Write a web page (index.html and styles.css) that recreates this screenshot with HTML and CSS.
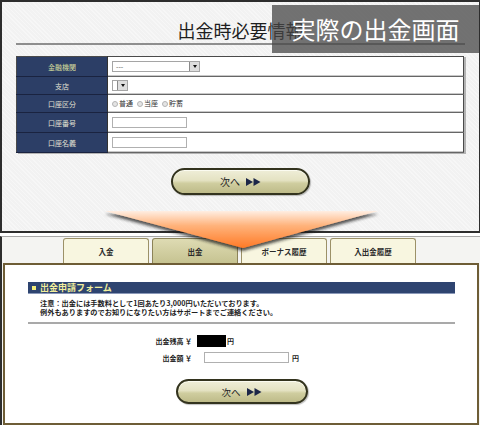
FILE: index.html
```html
<!DOCTYPE html>
<html lang="ja">
<head>
<meta charset="utf-8">
<title>出金時必要情報</title>
<link rel="stylesheet" href="styles.css">
</head>
<body>
<div class="page">
  <section class="top">
    <h1 class="title">出金時必要情報</h1>
    <table class="info">
      <tr class="row-a">
        <th class="lbl-hl">金融機関</th>
        <td><span class="sel sel-wide"><span class="sel-text">---</span><span class="sel-btn"><i></i></span></span></td>
      </tr>
      <tr class="row-b">
        <th>支店</th>
        <td><span class="sel sel-narrow"><span class="sel-btn"><i></i></span></span></td>
      </tr>
      <tr class="row-b">
        <th>口座区分</th>
        <td>
          <span class="radios">
            <span class="opt"><span class="radio"></span>普通</span>
            <span class="opt"><span class="radio"></span>当座</span>
            <span class="opt"><span class="radio"></span>貯蓄</span>
          </span>
        </td>
      </tr>
      <tr class="row-a">
        <th>口座番号</th>
        <td><input class="txt" type="text"></td>
      </tr>
      <tr class="row-a">
        <th>口座名義</th>
        <td><input class="txt" type="text"></td>
      </tr>
    </table>
    <div class="btn-row btn-row-top">
      <button class="next next-top" type="button">次へ<svg class="ff" width="15" height="8" viewBox="0 0 15 8"><path d="M0 0 L7 4 L0 8 Z M7.5 0 L14.5 4 L7.5 8 Z" fill="#1c2648"/></svg></button>
    </div>
  </section>
  <div class="gap"></div>
  <section class="bottom">
    <nav class="tabs">
      <span class="tab">入金</span>
      <span class="tab tab-active">出金</span>
      <span class="tab">ボーナス履歴</span>
      <span class="tab">入出金履歴</span>
    </nav>
    <div class="box">
      <h2 class="sec-head"><span class="sq"></span>出金申請フォーム</h2>
      <p class="note">注意：出金には手数料として1回あたり3,000円いただいております。<br>例外もありますのでお知りになりたい方はサポートまでご連絡ください。</p>
      <hr class="divider">
      <div class="amounts">
        <div class="amt-row"><span class="amt-lbl">出金残高 ￥</span><span class="masked"></span><span class="yen yen-a">円</span></div>
        <div class="amt-row amt-row-2"><span class="amt-lbl">出金額 ￥</span><input class="amt-input" type="text"><span class="yen yen-b">円</span></div>
      </div>
      <div class="btn-row btn-row-bottom">
        <button class="next next-bottom" type="button">次へ<svg class="ff" width="15" height="8" viewBox="0 0 15 8"><path d="M0 0 L7 4 L0 8 Z M7.5 0 L14.5 4 L7.5 8 Z" fill="#1c2648"/></svg></button>
      </div>
    </div>
  </section>

  <div class="caption">実際の出金画面</div>

  <svg class="arrow" width="480" height="425" viewBox="0 0 480 425">
    <defs>
      <linearGradient id="og" x1="0" y1="211" x2="0" y2="248" gradientUnits="userSpaceOnUse">
        <stop offset="0" stop-color="#ffeee2"/>
        <stop offset="0.4" stop-color="#ffb27a"/>
        <stop offset="1" stop-color="#ff7a26"/>
      </linearGradient>
      <filter id="sh" x="-10%" y="-20%" width="120%" height="170%">
        <feDropShadow dx="0" dy="3" stdDeviation="1.4" flood-color="#1a1a1a" flood-opacity="0.75"/>
      </filter>
    </defs>
    <path d="M105 211 L378 211 L243 248 Z" fill="url(#og)" filter="url(#sh)"/>
  </svg>
</div>
</body>
</html>
```

FILE: styles.css
```css
* { box-sizing: border-box; }

html, body {
  margin: 0;
  padding: 0;
}

body {
  width: 480px;
  height: 425px;
  overflow: hidden;
  background: #ffffff;
  font-family: "Noto Sans CJK JP", "Noto Sans", sans-serif;
  color: #222;
}

.page {
  position: relative;
  width: 480px;
  height: 425px;
}

/* ---------- top panel ---------- */
.top {
  height: 233px;
  border: 2px solid #2d2d2d;
  border-right-width: 1px;
  background-color: #f2f2f2;
  background-image: repeating-linear-gradient(45deg, rgba(255,255,255,0.35) 0 1px, transparent 1px 3px);
  padding: 0 14px;
}

.title {
  margin: 19px 0 0;
  font-size: 18px;
  line-height: 18px;
  font-weight: normal;
  text-align: center;
  color: #1e1e1e;
  padding-bottom: 4px;
  border-bottom: 2px solid #8e8e8e;
}

.info {
  margin-top: 11px;
  width: 448px;
  border-collapse: collapse;
  border: 1px solid #4a4a4a;
  box-shadow: 2px 1px 0 #b3b3b3;
}

.row-a { height: 20px; }
.row-b { height: 18px; }

.info th {
  width: 91px;
  padding: 0;
  background: #2c3e66;
  color: #e2e2d4;
  font-size: 7px;
  font-weight: normal;
  text-align: center;
  border-bottom: 1px solid #1a2340;
  border-right: 1px solid #333;
}

.info th.lbl-hl { color: #d4dc9c; }

.info td {
  padding: 0 0 0 4px;
  background: #fff;
  border-bottom: 1px solid #666;
  box-shadow: inset 0 -1px 0 #c8c8c8;
  vertical-align: middle;
  font-size: 7px;
}

.sel {
  display: flex;
  align-items: stretch;
  height: 11px;
  border: 1px solid #a5a5a5;
  background: #fff;
}

.sel-wide { width: 88px; }
.sel-narrow { width: 16px; }

.sel-text {
  flex: 1;
  padding-left: 3px;
  font-size: 7px;
  line-height: 9px;
  color: #555;
}

.sel-narrow::before {
  content: "";
  flex: 1;
}

.sel-btn {
  width: 10px;
  background: #dedede;
  border-left: 1px solid #8a8a8a;
  display: flex;
  align-items: center;
  justify-content: center;
}

.sel-btn i {
  width: 0;
  height: 0;
  border-left: 2.5px solid transparent;
  border-right: 2.5px solid transparent;
  border-top: 3px solid #111;
}

.radios {
  display: flex;
  align-items: center;
  color: #333;
  font-size: 7px;
  line-height: 9px;
}

.opt {
  display: flex;
  align-items: center;
  margin-right: 4px;
}

.radio {
  width: 6px;
  height: 6px;
  border-radius: 50%;
  border: 1px solid #b4b4b4;
  background: #e4e4e4;
  margin-right: 1px;
}

.txt {
  display: block;
  width: 75px;
  height: 11px;
  margin: 0;
  padding: 0;
  border: 1px solid #b0b0b0;
  background: #fff;
}

.btn-row {
  display: flex;
  justify-content: center;
}

.btn-row-top { margin-top: 15px; }

.next {
  display: flex;
  align-items: center;
  justify-content: center;
  gap: 6px;
  margin: 0;
  padding: 0;
  border: 2px solid #33331e;
  border-radius: 14px;
  background: linear-gradient(#efeed8 0%, #e4e2c2 45%, #cfcd9f 58%, #bebb89 100%);
  box-shadow: inset 0 1px 0 #fbfbf0, 1px 1px 1px rgba(0,0,0,0.25);
  font-family: "Noto Sans CJK JP", "Noto Sans", sans-serif;
  font-size: 10px;
  color: #222;
}

.next-top {
  width: 139px;
  height: 27px;
}

.next-bottom {
  width: 132px;
  height: 25px;
  font-size: 9.5px;
}

/* ---------- bottom panel ---------- */
.gap { height: 3px; }

.bottom {
  height: 189px;
  border-top: 1px solid #a8a8a8;
  border-left: 2px solid #2d2d2d;
  background: #f4f4f2;
  padding: 1px 0 0 1px;
}

.tabs {
  display: flex;
  gap: 3px;
  margin-left: 60px;
  height: 25px;
}

.tab {
  width: 86px;
  height: 25px;
  border: 1px solid #9c9168;
  border-bottom: none;
  border-radius: 3px 3px 0 0;
  background: #f8f6e0;
  font-size: 7.5px;
  font-weight: bold;
  color: #2a2a2a;
  display: flex;
  align-items: center;
  justify-content: center;
}

.tab-active {
  background: linear-gradient(#dedbb3, #c6c391);
  border-color: #8c8358;
}

.box {
  width: 476px;
  height: 162px;
  border: 2px solid #6e5d36;
  background: #fff;
  padding: 17px 22px 0 23px;
}

.sec-head {
  margin: 0;
  height: 12px;
  background: #2e4470;
  border-bottom: 1px solid #8a98b8;
  color: #f2ef9c;
  font-size: 9px;
  font-weight: bold;
  line-height: 12px;
  display: flex;
  align-items: center;
  gap: 4px;
  padding-left: 4px;
}

.sq {
  width: 4px;
  height: 4px;
  background: #f4ee7a;
}

.note {
  margin: 5px 0 0;
  padding-left: 12px;
  font-size: 7.2px;
  line-height: 8.5px;
  font-weight: bold;
  color: #222;
}

.divider {
  margin: 6px 0 0;
  border: 0;
  height: 2px;
  background: #a9a9a9;
}

.amounts { margin-top: 11px; }

.amt-row {
  display: flex;
  align-items: center;
  height: 12px;
  font-size: 7px;
  font-weight: bold;
  color: #222;
}

.amt-row-2 {
  height: 11px;
  margin-top: 5px;
}

.amt-lbl {
  width: 164px;
  text-align: right;
}

.masked {
  width: 29px;
  height: 12px;
  margin-left: 5px;
  background: #000;
}

.yen-a { margin-left: 1px; }
.yen-b { margin-left: 3px; }

.amt-input {
  width: 85px;
  height: 11px;
  margin: 0 0 0 12px;
  padding: 0;
  border: 1px solid #b0b0b0;
  background: #fff;
}

.btn-row-bottom { margin-top: 16px; }

/* ---------- overlays ---------- */
.caption {
  position: absolute;
  left: 272px;
  top: 5px;
  width: 207px;
  height: 48px;
  background: rgba(70, 70, 70, 0.75);
  color: #fff;
  font-size: 24px;
  line-height: 48px;
  text-align: center;
}

.arrow {
  position: absolute;
  left: 0;
  top: 0;
  pointer-events: none;
}
```
